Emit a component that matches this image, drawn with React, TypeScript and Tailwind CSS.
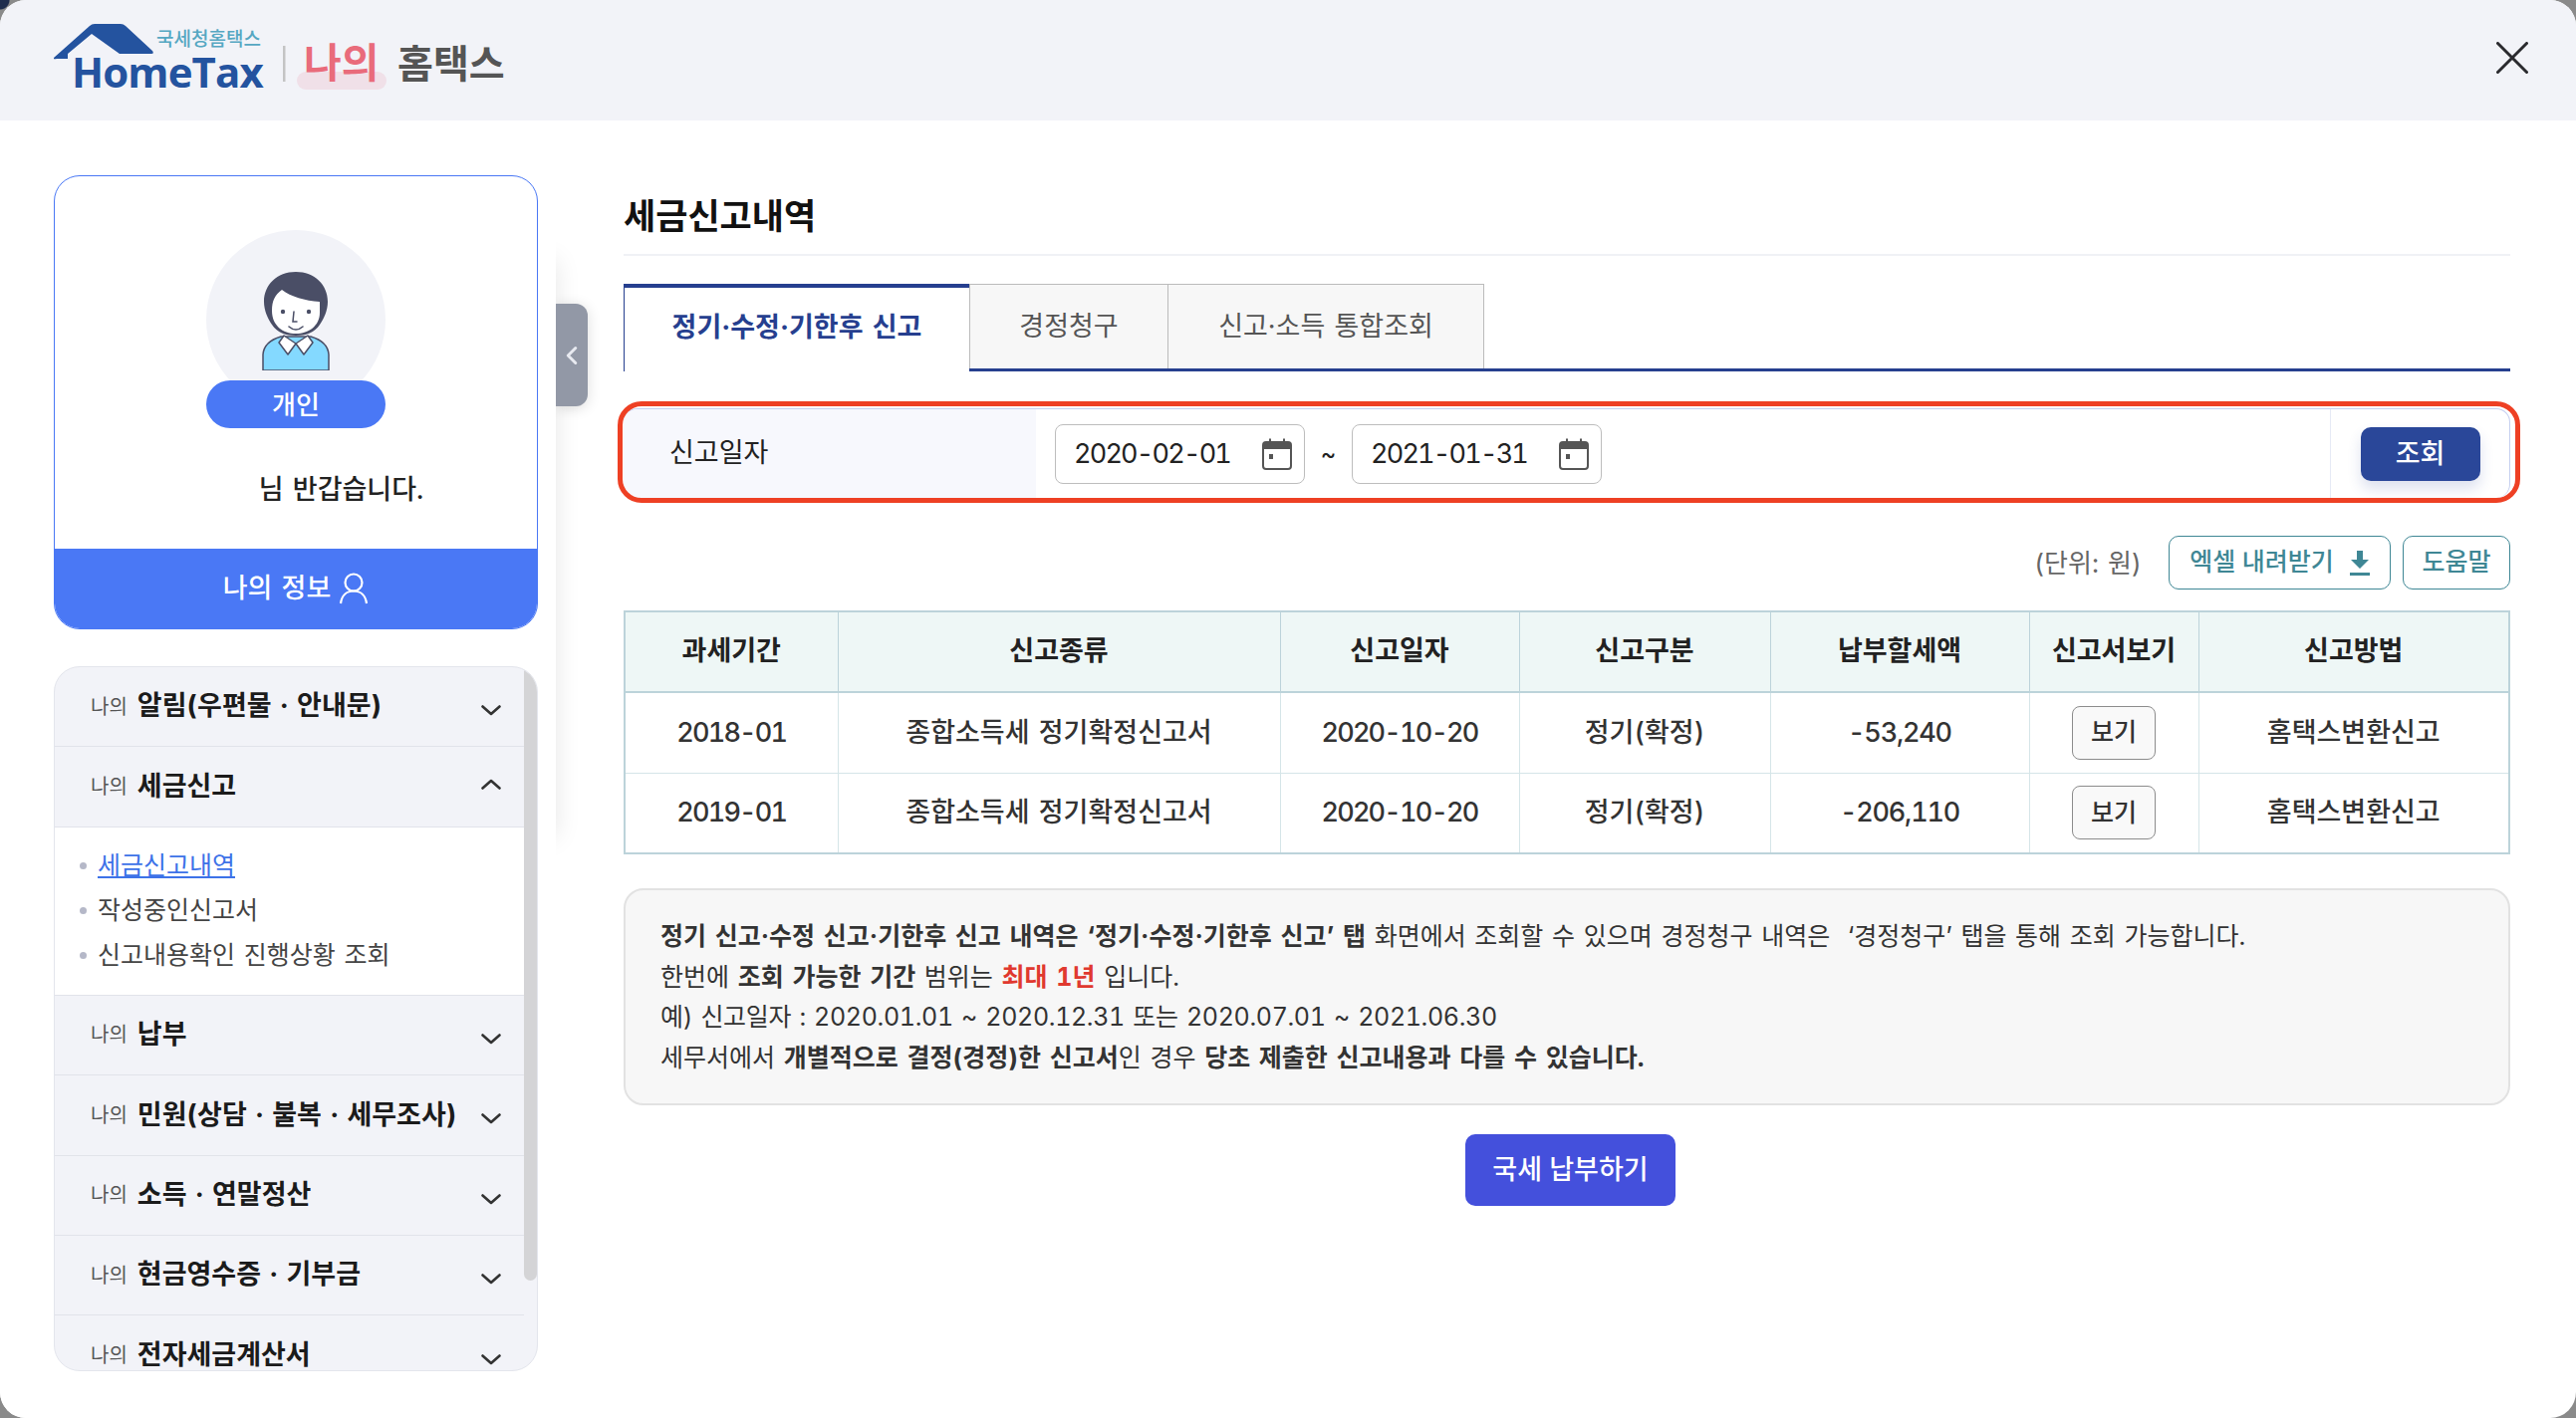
import { ChevronLeft } from 'lucide-react';

const MENUS = [
  { name: '알림(우편물 · 안내문)' },
  { name: '세금신고', open: true },
  { name: '납부' },
  { name: '민원(상담 · 불복 · 세무조사)' },
  { name: '소득 · 연말정산' },
  { name: '현금영수증 · 기부금' },
  { name: '전자세금계산서' },
];

const SUB_MENUS = ['세금신고내역', '작성중인신고서', '신고내용확인 진행상황 조회'];

const TABS = [
  { label: '정기·수정·기한후 신고', width: 'w-[347px]', active: true },
  { label: '경정청구', width: 'w-[200px]' },
  { label: '신고·소득 통합조회', width: 'w-[317px]' },
];

const COLS = ['w-[214px]', 'w-[444px]', 'w-[240px]', 'w-[252px]', 'w-[260px]', 'w-[170px]', 'w-[312px]'];
const HEADS = ['과세기간', '신고종류', '신고일자', '신고구분', '납부할세액', '신고서보기', '신고방법'];
const ROWS = [
  { period: '2018-01', kind: '종합소득세 정기확정신고서', date: '2020-10-20', type: '정기(확정)', tax: '-53,240', how: '홈택스변환신고' },
  { period: '2019-01', kind: '종합소득세 정기확정신고서', date: '2020-10-20', type: '정기(확정)', tax: '-206,110', how: '홈택스변환신고' },
];

function Logo() {
  return (
    <svg width="460" height="76" viewBox="0 0 460 76" className="block">
      <path
        d="M0 35 L36 3 Q38 1 41 1 L67 1 Q70 1 72 3 L99 28 Q101 31 98 31 L66 31 L38 11 L14 31 L14 36 L3 36 Q-1 37 0 35 Z"
        fill="#24539f"
      />
      <text x="18" y="65" fontSize="42" fontWeight="700" fill="#24539f" letterSpacing="-0.9" className="font-['Open_Sans',sans-serif]">
        HomeTax
      </text>
      <text x="103" y="23" fontSize="19" fontWeight="500" fill="#55a7c2" letterSpacing="0" className="font-['Noto_Sans_CJK_KR',sans-serif]">
        국세청홈택스
      </text>
      <rect x="230" y="23" width="2.5" height="36" fill="#c4c4c4" />
      <rect x="244" y="49" width="90" height="18" rx="9" fill="#f0e0e8" />
      <text x="251" y="55" fontSize="41" fontWeight="700" fill="#e96b7b" className="font-['Noto_Sans_CJK_KR',sans-serif]">
        나의
      </text>
      <text x="345" y="55" fontSize="39" fontWeight="700" fill="#555555" className="font-['Noto_Sans_CJK_KR',sans-serif]">
        홈택스
      </text>
    </svg>
  );
}

function Avatar() {
  return (
    <svg width="70" height="100" viewBox="0 0 70 100" className="block">
      <path d="M2 100 L2 84 Q3 71 20 66 L50 66 Q67 71 68 84 L68 100 Z" fill="#84d9ff" stroke="#4a4e66" strokeWidth="1.5" />
      <path d="M35 1 C16 1 3 14 3 31 C3 40 7 48 11 54 C16 62 25 65 35 65 C45 65 54 62 59 54 C63 48 67 40 67 31 C67 14 54 1 35 1 Z" fill="#4a4e66" />
      <path d="M21 19 C14 24 11 30 11 40 C11 55 22 63 35 63 C48 63 59 55 59 42 L59 31 C44 30 30 26 21 19 Z" fill="#ffffff" />
      <circle cx="22" cy="41" r="2.2" fill="#4a4e66" />
      <circle cx="48" cy="41" r="2.2" fill="#4a4e66" />
      <path d="M33 41 L32 51 L36 51" fill="none" stroke="#4a4e66" strokeWidth="1.5" strokeLinecap="round" />
      <path d="M28 56 Q35 62 42 56" fill="none" stroke="#4a4e66" strokeWidth="1.6" strokeLinecap="round" />
      <path d="M23 65 L35 73 L27 84 L18 72 Z" fill="#ffffff" stroke="#4a4e66" strokeWidth="1.5" strokeLinejoin="round" />
      <path d="M47 65 L35 73 L43 84 L52 72 Z" fill="#ffffff" stroke="#4a4e66" strokeWidth="1.5" strokeLinejoin="round" />
    </svg>
  );
}

function Chevron({ up }: { up?: boolean }) {
  return (
    <svg width="20" height="11" viewBox="0 0 20 11" className={up ? 'mt-[-5px] rotate-180' : 'mt-[8px]'}>
      <path d="M1.5 1.5 L10 9 L18.5 1.5" fill="none" stroke="#333333" strokeWidth="2.6" strokeLinecap="round" strokeLinejoin="round" />
    </svg>
  );
}

function CalendarIcon() {
  return (
    <svg width="30" height="32" viewBox="0 0 30 32" className="shrink-0">
      <rect x="1" y="4" width="28" height="27" rx="3" fill="#ffffff" stroke="#555555" strokeWidth="2" />
      <path d="M1 7 Q1 4 4 4 L26 4 Q29 4 29 7 L29 11 L1 11 Z" fill="#555555" />
      <rect x="7" y="0.5" width="2" height="5" fill="#555555" />
      <rect x="21" y="0.5" width="2" height="5" fill="#555555" />
      <rect x="7" y="16" width="4" height="5" fill="#555555" />
    </svg>
  );
}

function DateInput({ value }: { value: string }) {
  return (
    <div className="flex h-[60px] w-[251px] items-center justify-between rounded-[8px] border border-[#bdbdbd] bg-white pl-[18px] pr-[12px] text-[27px] text-[#222222]">
      <span className="pt-[2px] tracking-[-1.8px]">{value}</span>
      <CalendarIcon />
    </div>
  );
}

export default function App() {
  return (
    <div className="h-[1424px] w-[2586px] overflow-hidden bg-[radial-gradient(circle_at_0_0,#1f2d4d_9px,#8a8a8a_10px)] font-['Inter','Noto_Sans_CJK_KR',sans-serif] tabular-nums text-[#222222] [word-spacing:2px]">
      <div className="flex h-full flex-col overflow-hidden rounded-[26px] bg-white">
        <header className="flex h-[121px] shrink-0 items-center justify-between bg-[#f2f3f8] pl-[54px] pr-[48px]">
          <Logo />
          <svg width="32" height="32" viewBox="0 0 32 32" className="mb-[6px]">
            <path d="M1.5 1.5 L30.5 30.5 M30.5 1.5 L1.5 30.5" stroke="#2a2a2e" strokeWidth="3" strokeLinecap="round" />
          </svg>
        </header>

        <div className="flex min-h-0 flex-1">
          <div className="relative w-[558px] shrink-0">
            <div className="absolute left-[530px] top-[140px] h-[580px] w-[28px] shadow-[0_0_26px_rgba(0,0,0,0.1)]" />
            <button className="absolute left-[558px] top-[184px] flex h-[103px] w-[32px] items-center justify-center rounded-r-[12px] bg-[#9298a6] shadow-[0_2px_14px_rgba(0,0,0,0.14)]">
              <ChevronLeft size={30} strokeWidth={2.4} className="text-[#e8eaf0]" />
            </button>
            <aside className="relative h-full bg-white pl-[54px] pr-[18px] pt-[55px]">
              <section className="flex h-[456px] flex-col overflow-hidden rounded-[26px] border border-[#4a78f5]">
                <div className="flex flex-1 flex-col items-center pt-[54px]">
                  <div className="flex h-[180px] w-[180px] flex-col items-center justify-end rounded-full bg-[#f2f3f8] pb-[39px]">
                    <Avatar />
                  </div>
                  <div className="mt-[-29px] flex h-[48px] w-[180px] items-center justify-center rounded-full bg-[#4a78f5] text-[26px] font-medium text-white">
                    개인
                  </div>
                  <p className="ml-[91px] mt-[42px] text-[27px] font-medium text-[#222222]">님 반갑습니다.</p>
                </div>
                <div className="flex h-[80px] shrink-0 items-center justify-center gap-[8px] bg-[#4a78f5] text-[27px] font-medium text-white">
                  나의 정보
                  <svg width="30" height="32" viewBox="0 0 30 32">
                    <circle cx="15" cy="10" r="8.5" fill="none" stroke="#ffffff" strokeWidth="2.2" />
                    <path d="M2 31 C3 23 8 18.5 15 18.5 C22 18.5 27 23 28 31" fill="none" stroke="#ffffff" strokeWidth="2.2" />
                  </svg>
                </div>
              </section>

              <nav className="mt-[37px] flex h-[708px] overflow-hidden rounded-[26px] border border-[#e3e5ec] bg-[#f2f3f8]">
                <ul className="min-w-0 flex-1">
                  {MENUS.map((m) => (
                    <li key={m.name} className="border-b border-[#e1e3ea] last:border-b-0">
                      <div className="flex h-[79.4px] items-center justify-between pl-[36px] pr-[23px]">
                        <span className="flex items-center gap-[10px]">
                          <span className="text-[20px] text-[#555555]">나의</span>
                          <span className="text-[27px] font-bold text-[#1b1b1b] [word-spacing:1px]">{m.name}</span>
                        </span>
                        <Chevron up={m.open} />
                      </div>
                      {m.open && (
                        <ul className="flex h-[169px] flex-col gap-[5px] border-t border-[#e1e3ea] bg-white pl-[25px] pt-[19px]">
                          {SUB_MENUS.map((s, i) => (
                            <li key={s} className="flex h-[40px] items-center gap-[11px] text-[25px] text-[#444444]">
                              <span className="h-[7px] w-[7px] shrink-0 rounded-full bg-[#b5b8c8]" />
                              <span className={i === 0 ? 'text-[#3d72e8] underline underline-offset-2' : ''}>{s}</span>
                            </li>
                          ))}
                        </ul>
                      )}
                    </li>
                  ))}
                </ul>
                <div className="w-[13px] shrink-0">
                  <div className="h-[616px] rounded-b-[7px] bg-[#d4d4d6]" />
                </div>
              </nav>
            </aside>
          </div>

          <main className="min-w-0 flex-1 pl-[68px] pr-[66px]">
            <h1 className="flex h-[136px] items-center border-b-2 border-[#f0f1f5] pt-[58px] text-[35px] font-bold leading-none text-[#111111]">
              세금신고내역
            </h1>

            <div className="mt-[28px] flex h-[88px] border-b-[3px] border-[#263f8f]">
              {TABS.map((t) =>
                t.active ? (
                  <div
                    key={t.label}
                    className={`${t.width} mb-[-3px] flex items-center justify-center border-l border-t-[4px] border-[#263f8f] bg-white pb-[3px] text-[27px] font-bold text-[#263f8f]`}
                  >
                    {t.label}
                  </div>
                ) : (
                  <div
                    key={t.label}
                    className={`${t.width} flex items-center justify-center border-x border-t border-[#bbbbbb] bg-[#f7f7f7] text-[27px] text-[#555555] [&+&]:border-l-0`}
                  >
                    {t.label}
                  </div>
                ),
              )}
            </div>

            {/* 빨간 표시 테두리는 캡처에 그려진 것 */}
            <div className="relative mt-[37px] flex h-[90px] items-stretch rounded-[14px] border-r border-t border-[#c5cff0]">
              <div className="pointer-events-none absolute bottom-[-5px] left-[-6px] right-[-11px] top-[-8px] z-10 rounded-[24px] border-[5px] border-[#ee4024]" />
              <div className="flex w-[414px] items-center rounded-l-[14px] bg-[#f7f8fd] pl-[46px] text-[27px] text-[#222222]">신고일자</div>
              <div className="flex flex-1 items-center pl-[19px]">
                <DateInput value="2020-02-01" />
                <span className="w-[47px] text-center text-[24px] leading-none">~</span>
                <DateInput value="2021-01-31" />
              </div>
              <div className="flex w-[180px] items-center justify-center border-l border-[#e6eaf5]">
                <button className="h-[54px] w-[120px] rounded-[10px] bg-[#2a4799] pt-[2px] text-[27px] font-medium text-white shadow-[0_8px_14px_rgba(42,71,153,0.16)]">
                  조회
                </button>
              </div>
            </div>

            <div className="mt-[38px] flex h-[54px] items-center justify-end">
              <span className="mr-[27px] text-[26px] text-[#666666]">(단위: 원)</span>
              <button className="flex h-[54px] w-[223px] items-center justify-center gap-[16px] rounded-[10px] border border-[#3f8795] text-[25px] font-medium text-[#3f8795]">
                엑셀 내려받기
                <svg width="20" height="26" viewBox="0 0 20 26">
                  <path d="M7 1 H13 V10 H19 L10 19 L1 10 H7 Z" fill="#3f8795" />
                  <rect x="0" y="23" width="20" height="3" fill="#3f8795" />
                </svg>
              </button>
              <button className="ml-[12px] h-[54px] w-[108px] rounded-[10px] border border-[#3f8795] text-[25px] font-medium text-[#3f8795]">
                도움말
              </button>
            </div>

            <table className="mt-[21px] w-[1892px] table-fixed border-collapse border-2 border-[#bcd3da] text-center text-[27px]">
              <colgroup>
                {COLS.map((c) => (
                  <col key={c} className={c} />
                ))}
              </colgroup>
              <thead>
                <tr className="h-[81px] bg-[#eef7f6]">
                  {HEADS.map((h) => (
                    <th key={h} className="border border-b-2 border-[#bcd3da] font-bold text-[#222222]">
                      {h}
                    </th>
                  ))}
                </tr>
              </thead>
              <tbody>
                {ROWS.map((r) => (
                  <tr key={r.period} className="h-[81px] font-medium text-[#333333]">
                    <td className="border border-[#d5e5e8] tracking-[-1.8px]">{r.period}</td>
                    <td className="border border-[#d5e5e8]">{r.kind}</td>
                    <td className="border border-[#d5e5e8] tracking-[-1.8px]">{r.date}</td>
                    <td className="border border-[#d5e5e8]">{r.type}</td>
                    <td className="border border-[#d5e5e8] tracking-[-1.2px]">{r.tax}</td>
                    <td className="border border-[#d5e5e8]">
                      <button className="h-[54px] w-[84px] rounded-[8px] border border-[#8c8c8c] bg-[#f9f9f9] text-[25px] text-[#333333]">보기</button>
                    </td>
                    <td className="border border-[#d5e5e8]">{r.how}</td>
                  </tr>
                ))}
              </tbody>
            </table>

            <div className="mt-[34px] h-[218px] rounded-[20px] border-2 border-[#e2e2e2] bg-[#f7f7f7] px-[35px] pt-[26px] text-[25px] leading-[40.5px] text-[#333333]">
              <p>
                <b>정기 신고·수정 신고·기한후 신고 내역은 ‘정기·수정·기한후 신고’ 탭</b> 화면에서 조회할 수 있으며 경정청구 내역은 &nbsp;‘경정청구’ 탭을 통해 조회 가능합니다.
              </p>
              <p>
                한번에 <b>조회 가능한 기간</b> 범위는 <b className="text-[#e0392f]">최대 1년</b> 입니다.
              </p>
              <p className="tracking-[-0.35px]">예) 신고일자 : 2020.01.01 ~ 2020.12.31 또는 2020.07.01 ~ 2021.06.30</p>
              <p>
                세무서에서 <b>개별적으로 결정(경정)한 신고서</b>인 경우 <b>당초 제출한 신고내용과 다를 수 있습니다.</b>
              </p>
            </div>

            <div className="mt-[29px] flex justify-center pl-[7px]">
              <button className="h-[72px] w-[211px] rounded-[10px] bg-[#4450dc] text-[27px] font-medium text-white">국세 납부하기</button>
            </div>
          </main>
        </div>
      </div>
    </div>
  );
}
